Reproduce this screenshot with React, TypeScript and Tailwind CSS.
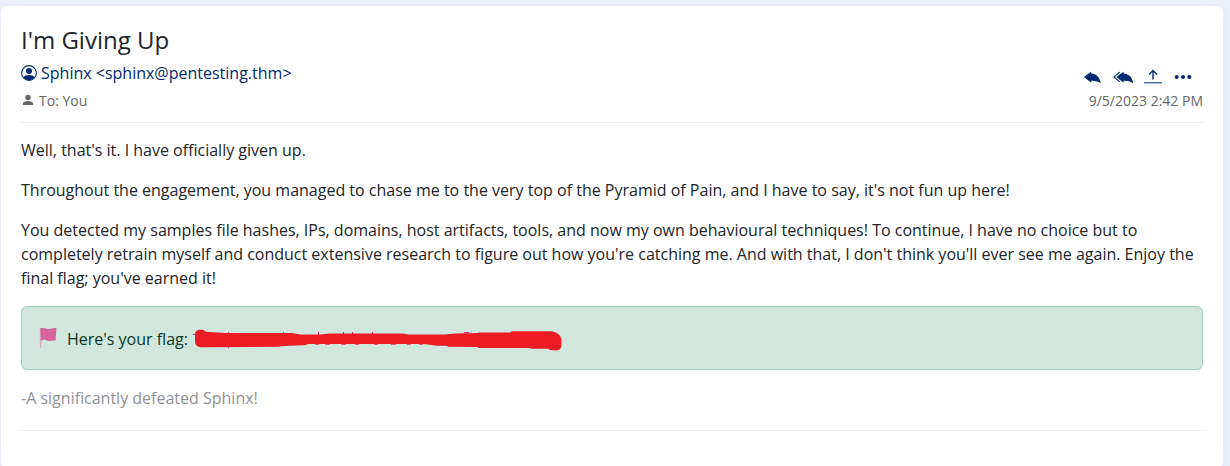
import React from "react";

function AccountIcon() {
  return (
    <svg viewBox="0 0 16 16" className="size-4 shrink-0">
      <circle cx="8" cy="8" r="7.4" fill="none" stroke="#002a70" strokeWidth="1.1" />
      <circle cx="8" cy="6" r="3" fill="#002a70" />
      <path d="M2.4 12.3C3.8 10.7 5.6 10 8 10s4.2.7 5.6 2.3A7.2 7.2 0 0 1 8 15.4a7.2 7.2 0 0 1-5.6-3.1Z" fill="#002a70" />
    </svg>
  );
}

function PersonIcon() {
  return (
    <svg viewBox="0 0 12 12" className="size-3 shrink-0 -translate-y-px" fill="#666">
      <circle cx="6" cy="3.4" r="2.75" />
      <path d="M.9 11V9.8C.9 7.9 3.6 7 6 7s5.1.9 5.1 2.8V11Z" />
    </svg>
  );
}

const replyShape = "M0 5.4 7.2 0v2.1C12.2 2.4 15.8 5.5 16.8 12 14.4 9.8 11.7 9.1 7.2 9.2v2.1Z";

function Actions() {
  return (
    <div className="flex h-5 items-center text-[#002a70]">
      <svg viewBox="0 0 17 12" className="h-3 w-[17px] translate-y-[1.5px]" fill="currentColor"><path d={replyShape} /></svg>
      <svg viewBox="0 0 20 12" className="ml-3 h-3 w-5 translate-y-[1.5px]" fill="currentColor">
        <path d={replyShape} transform="translate(3.4 0)" />
        <path d="M6.8.5.9 5.4l5.9 5" fill="none" stroke="currentColor" strokeWidth="1.1" />
      </svg>
      <svg viewBox="0 0 18 16" className="ml-[11px] h-4 w-[18px]" fill="none" stroke="currentColor">
        <path d="M9 11.5V2.5M5 6.500l4-4 4 4" strokeWidth="1.4" />
        <path d="M0 14.8h18" strokeWidth="1" />
      </svg>
      <svg viewBox="0 0 18 6" className="ml-3 h-1.5 w-[18px] translate-y-px" fill="currentColor">
        <circle cx="2.7" cy="3" r="2" /><circle cx="9" cy="3" r="2" /><circle cx="15.3" cy="3" r="2" />
      </svg>
    </div>
  );
}

function FlagIcon() {
  return (
    <svg viewBox="0 0 18 22" className="h-[22px] w-[18px] shrink-0 -translate-y-px">
      <path d="M1.6 1v19.6" stroke="#dda0c0" strokeWidth="1.5" />
      <path d="M1.4 1.3C5 .1 7.7 2.3 10.5 2c2.7-.2 4-1.2 6.9-.8l-.8 12.5c-3.2-.5-4.3.8-7 .3-2.7-.6-4.3-2-7.5-.4Z" fill="#d6659c" />
    </svg>
  );
}

function Redaction() {
  return (
    <svg viewBox="0 0 370 24" className="ml-[5px] h-6 w-[370px] shrink-0">
      <path d="M0 7.5h4M35.5 5v16M90.5 5v4M125.5 5v4M150.5 5v4M159.5 5v4M179.5 5v4M271 5.5h5" stroke="#dd247f" />
      <path
        d="M2 7Q2.5 3 6 2.7h4l3 2L32 6h67l8 1.5h20l10-1h73l5 1h37l10-1 23-.5 1-.5h31l2-1.2h39Q366 5 368.5 12v6q0 5.2-5.5 5.5l-6-.5-2-1.2h-17l-1-.7h-51l-2-1-29-.3-1-1h-10l-13-1.700H115l-3 1.200-17 .5-10 1L8 20.300q-6-.3-6-6Z"
        fill="#ed1c24"
      />
      <path d="M122 17.3h4M132 17.3h5M148 17.3h5M162 17.3h4M181 17.3h4M198 17.3h5M214 17.3h4M226 17.3h4" stroke="#df1749" strokeWidth=".8" />
    </svg>
  );
}

export default function App() {
  return (
    <main className="h-[466px] overflow-hidden bg-[#edf1fc] pt-1.5 pr-[7px] pl-px font-['Open_Sans',sans-serif] text-base leading-6 text-[#212529]">
      <article className="h-[462px] rounded-md bg-white px-5 pt-5 shadow-[0_0_12px_rgba(90,110,190,0.06)]">
        <header className="flex h-[97px] items-end justify-between border-b border-[#ececec] pb-[10px]">
          <div>
            <h1 className="text-2xl leading-7">I'm Giving Up</h1>
            <div className="mt-[7px] flex items-center gap-1 text-[#002a70]">
              <AccountIcon />
              <span>Sphinx &lt;sphinx@pentesting.thm&gt;</span>
            </div>
            <div className="mt-[5px] flex items-center gap-[5px] pl-px text-sm leading-[22px] text-[#666]">
              <PersonIcon />
              <span>To: You</span>
            </div>
          </div>
          <div className="text-right text-sm leading-[22px] text-[#666]">
            <div className="mr-[11px] mb-1 flex justify-end"><Actions /></div>
            <time>9/5/2023 2:42 PM</time>
          </div>
        </header>
        <section className="pt-[15px]">
          <p className="mb-4">Well, that's it. I have officially given up.</p>
          <p className="mb-4">Throughout the engagement, you managed to chase me to the very top of the Pyramid of Pain, and I have to say, it's not fun up here!</p>
          <p className="mb-4">You detected my samples file hashes, IPs, domains, host artifacts, tools, and now my own behavioural techniques! To continue, I have no choice but to completely retrain myself and conduct extensive research to figure out how you're catching me. And with that, I don't think you'll ever see me again. Enjoy the final flag; you've earned it!</p>
          <div className="flex h-16 items-center rounded-md border border-[#a3cfbb] bg-[#d1e7dd] pt-0.5 pl-[17px] text-[#0a3622]">
            <FlagIcon />
            <span className="ml-[10px] whitespace-nowrap">Here's your flag:</span>
            <Redaction />
          </div>
          <p className="mt-4 text-[#909294]">-A significantly defeated Sphinx!</p>
          <div className="mt-5 border-b border-[#ececec]" />
        </section>
      </article>
    </main>
  );
}
